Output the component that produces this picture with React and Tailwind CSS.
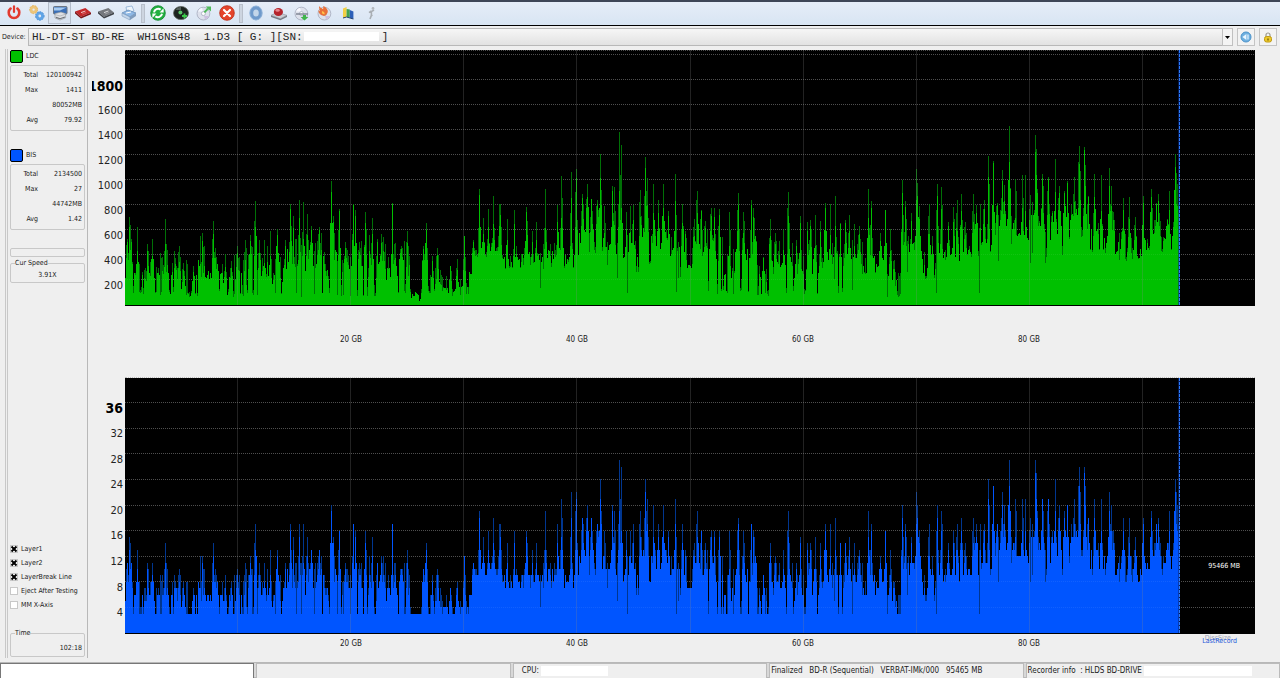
import React from 'react';

// ── Chart data ────────────────────────────────────────────

const PLOT_W = 1130;
const PLOT_H = 255;
const END_X = 1054;

// [start, base height, jitter, dip floor, dip chance]
const REGIONS = [
  [0, 34, 14, 10, 0.32],
  [55, 24, 14, 8, 0.42],
  [72, 36, 18, 9, 0.4],
  [94, 26, 14, 10, 0.36],
  [108, 42, 16, 8, 0.34],
  [136, 36, 18, 8, 0.4],
  [160, 46, 20, 8, 0.34],
  [212, 42, 20, 8, 0.42],
  [262, 40, 20, 12, 0.38],
  [286, 14, 8, 10, 0.3],
  [296, 40, 12, 11, 0.28],
  [304, 26, 16, 10, 0.5],
  [317, 20, 12, 10, 0.5],
  [344, 34, 6, 26, 0.1],
  [348, 56, 8, 40, 0.1],
  [376, 50, 14, 34, 0.22],
  [420, 54, 16, 36, 0.2],
  [454, 74, 18, 52, 0.2],
  [476, 58, 12, 38, 0.18],
  [500, 60, 14, 30, 0.16],
  [514, 68, 18, 40, 0.16],
  [545, 58, 14, 26, 0.16],
  [560, 44, 14, 28, 0.16],
  [568, 60, 12, 40, 0.18],
  [579, 56, 14, 11, 0.24],
  [598, 34, 16, 11, 0.4],
  [610, 56, 16, 11, 0.26],
  [631, 26, 16, 9, 0.5],
  [644, 46, 14, 10, 0.3],
  [664, 40, 20, 11, 0.42],
  [700, 52, 16, 12, 0.3],
  [732, 48, 12, 30, 0.26],
  [762, 32, 16, 8, 0.48],
  [776, 58, 14, 32, 0.26],
  [798, 44, 12, 26, 0.3],
  [814, 56, 12, 42, 0.22],
  [846, 68, 14, 46, 0.22],
  [872, 86, 12, 60, 0.18],
  [890, 72, 12, 48, 0.22],
  [906, 88, 14, 50, 0.22],
  [920, 76, 14, 48, 0.22],
  [938, 94, 12, 66, 0.2],
  [962, 76, 12, 52, 0.22],
  [986, 60, 12, 44, 0.22],
  [1024, 74, 12, 52, 0.22],
  [1048, 84, 6, 70, 0.1],
];

// x, peak height
const PEAKS = [
  2, 66, 4, 88, 6, 66, 12, 78, 22, 61, 27, 66, 40, 86, 42, 55, 50, 42, 54, 59, 58, 42, 68, 39,
  75, 69, 77, 72, 79, 59, 88, 84, 90, 57, 100, 51, 106, 43, 112, 59, 120, 65, 125, 70, 130, 104,
  134, 65, 142, 59, 145, 74, 152, 76, 160, 63, 165, 101, 168, 89, 174, 105, 178, 103, 182, 91,
  186, 79, 192, 64, 194, 78, 199, 53, 206, 124, 208, 89, 214, 96, 220, 63, 222, 55, 228, 101,
  230, 95, 234, 63, 240, 93, 244, 70, 247, 87, 252, 66, 256, 71, 258, 68, 267, 102, 270, 62,
  276, 59, 282, 74, 298, 59, 301, 82, 307, 49, 312, 57, 325, 39, 332, 46, 339, 69, 348, 65,
  354, 116, 358, 87, 363, 96, 368, 109, 374, 101, 375, 101, 382, 86, 389, 95, 401, 98, 407, 74,
  411, 83, 420, 116, 432, 100, 436, 129, 446, 133, 451, 136, 457, 111, 462, 121, 466, 106,
  472, 105, 475, 151, 479, 99, 487, 119, 489, 118, 494, 173, 496, 160, 501, 93, 505, 99, 508, 100,
  515, 115, 520, 148, 522, 127, 528, 121, 533, 105, 538, 121, 543, 94, 550, 131, 557, 101,
  560, 74, 569, 86, 572, 114, 576, 95, 580, 84, 586, 97, 589, 97, 594, 96, 604, 93, 613, 112,
  618, 93, 626, 105, 628, 97, 630, 69, 638, 48, 645, 86, 650, 72, 658, 75, 663, 113, 671, 65,
  675, 89, 682, 83, 685, 85, 690, 90, 695, 84, 700, 102, 705, 101, 710, 109, 715, 82, 720, 85,
  724, 90, 729, 81, 734, 79, 743, 116, 746, 104, 755, 72, 760, 95, 765, 76, 777, 125, 780, 104,
  786, 92, 791, 136, 792, 122, 794, 99, 804, 101, 807, 69, 812, 121, 816, 118, 823, 83, 828, 98,
  832, 105, 836, 111, 840, 83, 848, 111, 851, 100, 855, 101, 859, 105, 863, 149, 868, 144,
  872, 102, 877, 135, 879, 120, 884, 179, 890, 126, 897, 130, 900, 130, 905, 110, 910, 170,
  911, 149, 917, 131, 923, 128, 927, 94, 930, 146, 934, 119, 939, 114, 942, 124, 949, 128,
  954, 159, 959, 158, 963, 109, 969, 131, 976, 130, 984, 137, 986, 119, 988, 93, 998, 107,
  1004, 108, 1010, 88, 1018, 109, 1026, 116, 1031, 102, 1033, 111, 1042, 86, 1044, 114,
  1050, 151, 1052, 121, 1053, 92,
];

// single deep dips inside the dense part
const DIPS = [415, 17, 492, 27, 502, 12, 551, 13, 811, 12, 854, 12, 873, 44, 905, 42, 920, 42];

const random = (seed) => {
  let s = seed;
  return () => {
    s = (s * 1664525 + 1013904223) % 4294967296;
    return s / 4294967296;
  };
};

const buildScan = () => {
  const rnd = random(91);
  const solid = [];
  const dim = [];
  let r = 0;
  for (let x = 0; x < END_X; x++) {
    while (r < REGIONS.length - 1 && REGIONS[r + 1][0] <= x) r++;
    const [, base, jitter, floor, chance] = REGIONS[r];
    const wave = Math.sin(x * 0.55) * 0.4 + Math.sin(x * 0.21) * 0.3;
    const v = base - 4 + jitter * (wave * 0.6 + (rnd() - 0.5));
    const dip = rnd() < chance;
    solid[x] = dip ? floor + rnd() * 4 : v;
    dim[x] = rnd() < 0.3 ? v + jitter * rnd() * 1.4 : solid[x] + (v - solid[x]) * rnd() * 0.4;
  }
  for (let i = 0; i < PEAKS.length; i += 2) {
    const x = PEAKS[i];
    const h = PEAKS[i + 1];
    const base = Math.max(solid[x], 20);
    const k = rnd();
    dim[x] = Math.max(dim[x], h);
    solid[x] = Math.max(solid[x], base + (h - base) * (0.4 + k * 0.6));
    [-1, 1].forEach((d) => {
      const n = x + d;
      if (n < 0 || n >= END_X) return;
      dim[n] = Math.max(dim[n], base + (h - base) * 0.85 * rnd());
      solid[n] = Math.max(solid[n], base + (h - base) * 0.5 * rnd());
    });
  }
  for (let i = 0; i < DIPS.length; i += 2) {
    solid[DIPS[i]] = DIPS[i + 1];
  }
  return { solid, dim };
};

const SCAN = buildScan();

// BIS counts follow LDC in whole steps of 6.4px
const toBis = (h) => Math.min(27, Math.max(3, Math.round(h * 0.154 + 1.2))) * 6.4;

const areaPath = (values) => {
  const pts = values.map((v, x) => `V${(PLOT_H - v).toFixed(1)}H${x + 1}`).join('');
  return `M0 ${PLOT_H}${pts}V${PLOT_H}Z`;
};

const LDC_PATHS = { solid: areaPath(SCAN.solid), dim: areaPath(SCAN.dim) };
const BIS_PATHS = {
  solid: areaPath(SCAN.solid.map(toBis)),
  dim: areaPath(SCAN.dim.map(toBis)),
};

// ── Icons ─────────────────────────────────────────────────

const Icon = ({ children }) => (
  <svg width="16" height="16" viewBox="0 0 16 16" fill="none" aria-hidden="true">{children}</svg>
);

const PowerIcon = () => (
  <Icon>
    <path d="M4.600 3.600A5.300 5.300 0 1 0 11.400 3.600" stroke="#e23a30" strokeWidth="2.600" strokeLinecap="round" />
    <path d="M8 1.400V7" stroke="#e23a30" strokeWidth="2.200" strokeLinecap="round" />
  </Icon>
);

const GearsIcon = () => (
  <Icon>
    <circle cx="4.600" cy="4.600" r="2.600" stroke="#ecc57a" strokeWidth="2.800" />
    <circle cx="4.600" cy="4.600" r="4" stroke="#e2b25a" strokeWidth="1" strokeDasharray="1.600 1.200" />
    <circle cx="10.800" cy="11" r="2.800" stroke="#5fa4e6" strokeWidth="2.800" />
    <circle cx="10.800" cy="11" r="4.300" stroke="#4a8fd6" strokeWidth="1" strokeDasharray="1.600 1.200" />
  </Icon>
);

const DriveScreenIcon = () => (
  <Icon>
    <rect x="1.500" y="1.500" width="13.500" height="7.500" rx="1" fill="#3b70b8" stroke="#6a7482" />
    <path d="M2 2.500h12.500L8 5.500H2Z" fill="#a8cbf0" />
    <path d="M3 8.600 9 7l4.600 1.600v4.200L8 15l-5-2Z" fill="#dfe1e4" stroke="#8b9096" strokeWidth=".6" />
    <path d="M3 9.600 8 11l5.600-1.800" stroke="#9ea3a9" strokeWidth=".6" />
    <path d="M4 12.400l4 1.300 5-1.700" stroke="#6d7278" strokeWidth="1.200" />
  </Icon>
);

const ChipIcon = ({ top, side }) => (
  <Icon>
    <path d="M0 6.600 10.400 3 16 7.400 6 11.800Z" fill={top} />
    <path d="M0 6.600 6 11.800V13.600L0 8.400Z" fill={side} />
    <path d="M6 11.800 16 7.400V9.200L6 13.600Z" fill={side} />
    <path d="M6 7.600 10.400 6" stroke="#fff" strokeOpacity=".75" />
    <path d="M7 9 11.200 7.400" stroke="#fff" strokeOpacity=".4" strokeWidth=".7" />
  </Icon>
);

const PrinterIcon = () => (
  <Icon>
    <path d="M5 2l6-1 2 5-7 2Z" fill="#eef5fc" stroke="#7ea3cc" strokeWidth=".7" />
    <path d="M1 8l6-3 8 3-6 4Z" fill="#8fb8e4" stroke="#5f87b3" strokeWidth=".7" />
    <path d="M1 8v3l8 4v-3Z" fill="#c4d6ea" stroke="#6c8db2" strokeWidth=".5" />
    <path d="M9 12l6-4v3l-6 4Z" fill="#7f9cbd" />
    <path d="M5 8l5-1" stroke="#fff" />
  </Icon>
);

const RefreshIcon = () => (
  <Icon>
    <circle cx="8" cy="8" r="7.300" fill="#22b040" stroke="#12852c" strokeWidth=".8" />
    <path d="M4 7.400A4.200 4.200 0 0 1 10.600 4.600" stroke="#fff" strokeWidth="2" />
    <path d="M9.600 7.600h4V3.200Z" fill="#fff" />
    <path d="M12 8.800A4.200 4.200 0 0 1 5.400 11.400" stroke="#fff" strokeWidth="2" />
    <path d="M6.400 8.600h-4V13Z" fill="#fff" />
  </Icon>
);

const BlackDiscIcon = () => (
  <Icon>
    <ellipse cx="8" cy="8" rx="7.500" ry="6.600" fill="#1c231f" stroke="#5f6662" strokeWidth=".8" />
    <path d="M2.600 5A6 6 0 0 1 8 2v3Z" fill="#55605a" />
    <circle cx="7.400" cy="7.600" r="2" fill="#5ac468" />
    <path d="M9 11h5M11.500 8.600v5" stroke="#39c84a" strokeWidth="1.800" />
  </Icon>
);

const Cd = () => (
  <>
    <circle cx="7.400" cy="8.600" r="6.400" fill="#dde1ec" stroke="#a4abbc" strokeWidth=".8" />
    <path d="M2 6.400A6 6 0 0 1 6 2.800l1 3.600Z" fill="#f8f9ff" />
    <path d="M13 11A6 6 0 0 1 9 14.400L8 11Z" fill="#cdbfe0" />
    <circle cx="7.400" cy="8.600" r="2" fill="#fff" stroke="#a4abbc" strokeWidth=".8" />
  </>
);

const CdUpIcon = () => (
  <Icon>
    <Cd />
    <path d="M8.400 7.400 12 3.600" stroke="#4dba58" strokeWidth="2" />
    <path d="M9.800 1.400H15v5.200Z" fill="#4dba58" />
  </Icon>
);

const CloseIcon = () => (
  <Icon>
    <circle cx="8" cy="8" r="7.300" fill="#e4452c" stroke="#bb2a14" strokeWidth=".8" />
    <path d="M5 5l6 6M11 5l-6 6" stroke="#fff" strokeWidth="2.200" strokeLinecap="round" />
  </Icon>
);

const RingIcon = () => (
  <Icon>
    <ellipse cx="8" cy="8" rx="4.600" ry="5.400" fill="#c3d6ea" stroke="#6f9acb" strokeWidth="3.600" />
    <ellipse cx="8" cy="8" rx="6.200" ry="7" stroke="#9cbbdd" strokeWidth=".8" />
  </Icon>
);

const RedDriveIcon = () => (
  <Icon>
    <path d="M0 10.400 6 7.400l10 3-6.600 3.400Z" fill="#c9ccd2" stroke="#878c95" strokeWidth=".6" />
    <path d="M0 10.400v1.600l9.400 3.200v-1.400ZM9.400 13.800l6.600-3.400v1.600l-6.600 3.200Z" fill="#777c85" />
    <ellipse cx="7.400" cy="7" rx="4.600" ry="4" fill="#b5232b" />
    <ellipse cx="6.600" cy="5.400" rx="2.200" ry="1.400" fill="#e9858a" />
  </Icon>
);

const CdDownIcon = () => (
  <Icon>
    <Cd />
    <path d="M2 9h12" stroke="#7a8190" strokeWidth="1.400" />
    <path d="M9 10h3v2h2.400L10.500 15.600 6.600 12H9Z" fill="#3fb54a" />
  </Icon>
);

const FlameCdIcon = () => (
  <Icon>
    <Cd />
    <path d="M2 1c1 1.600 2.600 1.800 4 3 .6-1 .4-2 0-3 3 1 5.600 4 4.600 6.600S8 11.600 5.600 10.600 1 8 1.600 5c.3.6.6 1 1.200 1.200C2.600 4 1.800 2.600 2 1Z" fill="#e8703a" />
    <path d="M5 6c1.400.4 3 1.400 2.600 3.200C6 9.600 4.400 8.400 5 6Z" fill="#ffc04a" />
  </Icon>
);

const BooksIcon = () => (
  <Icon>
    <path d="M3 3.400 6.600 2v10L3 13Z" fill="#f2cf45" />
    <path d="M6.600 4l3.200.4v8.400L6.600 12Z" fill="#44a350" />
    <path d="M9.800 5l3.600 1.600v7.400L9.800 12.800Z" fill="#2c5fb8" />
    <path d="M3 13l3.600-1 6.800 2" stroke="#23426f" />
  </Icon>
);

const FigureIcon = () => (
  <Icon>
    <path d="M8.400 6 6 7.600M8.400 6v4.400L7 14M8.400 10l1 .8M8.400 6.600 11 5" stroke="#a9aeb3" strokeWidth="1.600" />
    <circle cx="10" cy="3.400" r="1.400" fill="#b4b9bf" />
  </Icon>
);

const TOOLS = [
  ['Power', <PowerIcon />],
  ['Settings', <GearsIcon />],
  ['Drive', <DriveScreenIcon />],
  ['Read chip', <ChipIcon top="#c3282a" side="#7c1214" />],
  ['Write chip', <ChipIcon top="#74777c" side="#3f4246" />],
  ['Print', <PrinterIcon />],
  null,
  ['Refresh', <RefreshIcon />],
  ['Disc info', <BlackDiscIcon />],
  ['Export disc', <CdUpIcon />],
  ['Stop', <CloseIcon />],
  null,
  ['Ring', <RingIcon />],
  ['Eject', <RedDriveIcon />],
  ['Load', <CdDownIcon />],
  ['Burn', <FlameCdIcon />],
  ['Library', <BooksIcon />],
  ['About', <FigureIcon />],
];

// ── Bars ──────────────────────────────────────────────────

const Toolbar = () => (
  <div className="flex h-[26px] items-center border-t-2 border-b border-t-[#3f4657] border-b-black bg-linear-to-b from-[#e6edf8] to-[#d8e5f3] pb-px pl-0.5">
    {TOOLS.map((tool, i) =>
      tool ? (
        <button
          key={tool[0]}
          type="button"
          aria-label={tool[0]}
          className={i === 2
            ? 'flex h-[22px] w-[23px] items-center justify-center border border-[#b4bdca] bg-[#d9e3f0]'
            : 'flex h-[22px] w-[23px] items-center justify-center'}
        >
          {tool[1]}
        </button>
      ) : (
        <span key={i} className="mx-px h-[19px] w-1 border border-[#b9c0cb] bg-[#cdd5e0]" />
      )
    )}
  </div>
);

const DeviceBar = () => (
  <div className="mt-[2px] flex h-[18px] items-center gap-1 pr-[3px] pl-0.5">
    <label htmlFor="device" className="w-[22px] text-[7px] whitespace-nowrap">Device:</label>
    <div className="relative h-[18px] flex-1">
      <select
        id="device"
        className="h-full w-full appearance-none border border-[#b8b8b8] bg-linear-to-b from-[#f6f6f6] to-[#e2e2e2] pl-[3px] font-['Liberation_Mono',monospace] text-[11px] leading-4 text-[#222]"
      >
        <option>{'HL-DT-ST\u00a0BD-RE\u00a0\u00a0WH16NS48\u00a0\u00a01.D3\u00a0[\u00a0G:\u00a0][SN:\u00a0\u00a0\u00a0\u00a0\u00a0\u00a0\u00a0\u00a0\u00a0\u00a0\u00a0\u00a0]'}</option>
      </select>
      <span className="absolute top-1 left-[276px] h-[9px] w-[75px] bg-white" />
      <span className="pointer-events-none absolute top-0 right-0 flex h-full w-[11px] items-center justify-center border border-[#c0c0c0] bg-[#f4f4f4]">
        <svg width="5" height="3" viewBox="0 0 5 3"><path d="M0 0h5L2.500 3Z" fill="#000" /></svg>
      </span>
    </div>
    <button type="button" aria-label="Back" className="flex h-[18px] w-[18px] items-center justify-center border border-[#c4c4c4] bg-[#f3f3f3]">
      <svg width="12" height="12" viewBox="0 0 12 12">
        <circle cx="6" cy="6" r="5" fill="#6fb0e0" stroke="#4a92ca" />
        <path d="M2.400 6 6.400 3v6ZM7.400 3.400h1.200v5.200H7.400Z" fill="#eaf6ff" />
      </svg>
    </button>
    <button type="button" aria-label="Lock" className="flex h-[18px] w-[18px] items-center justify-center border border-[#c4c4c4] bg-[#f3f3f3]">
      <svg width="10" height="11" viewBox="0 0 10 11">
        <path d="M3 5V3a2 2 0 0 1 4 0v2" fill="none" stroke="#9a9a90" strokeWidth="1.200" />
        <rect x="1.500" y="4.500" width="7" height="5.500" rx="2" fill="#ecc92a" stroke="#c09a16" />
        <path d="M5 6.400v2" stroke="#6b5200" strokeWidth="1.200" />
      </svg>
    </button>
  </div>
);

// ── Sidebar ───────────────────────────────────────────────

const StatBlock = ({ name, swatch, total, max, at, avg }) => (
  <section>
    <h2 className="flex h-[13px] items-center gap-[3px]">
      <span className={`h-[13px] w-[13px] rounded-[2px] border border-black ${swatch}`} />
      {name}
    </h2>
    <dl className="mt-[2px] grid grid-cols-[27px_1fr] rounded-[2px] border border-[#c8c8c8] py-[2px] pr-[2px] leading-[15px]">
      <dt className="text-right">Total</dt>
      <dd className="text-right">{total}</dd>
      <dt className="text-right">Max</dt>
      <dd className="text-right">{max}</dd>
      <dd className="col-start-2 text-right">{at}</dd>
      <dt className="text-right">Avg</dt>
      <dd className="text-right">{avg}</dd>
    </dl>
  </section>
);

const Check = ({ label, checked }) => (
  <label className="flex h-[14px] items-center gap-[3px] whitespace-nowrap">
    <span className="relative flex h-2 w-2">
      <input
        type="checkbox"
        defaultChecked={checked}
        className="peer h-2 w-2 appearance-none border border-[#c8c8c8] bg-white"
      />
      <svg className="pointer-events-none absolute inset-0 hidden peer-checked:block" width="8" height="8" viewBox="0 0 8 8">
        <path d="M1.500 1.500l5 5M6.500 1.500l-5 5" stroke="#000" strokeWidth="2" />
      </svg>
    </span>
    {label}
  </label>
);

const Sidebar = () => (
  <aside className="flex w-[88px] shrink-0 border-r border-[#b8b8b8] pl-[5px] text-[7px]">
    <div className="flex min-w-0 flex-1 flex-col border-l-3 border-double border-[#c8c8c8] py-px pr-[2px] pl-[2px]">
      <StatBlock name="LDC" swatch="bg-[#00c000]" total="120100942" max="1411" at="80052MB" avg="79.92" />
      <div className="h-[18px]" />
      <StatBlock name="BIS" swatch="bg-[#0055ff]" total="2134500" max="27" at="44742MB" avg="1.42" />
      <div className="mt-[18px] h-[9px] rounded-[2px] border border-[#c8c8c8]" />
      <fieldset className="mt-px min-w-0 rounded-[2px] border border-[#c8c8c8] text-center">
        <legend className="ml-1 text-left leading-[10px]">Cur Speed</legend>
        <p className="leading-[14px]">3.91X</p>
      </fieldset>
      <div className="flex-1" />
      <Check label="Layer1" checked />
      <Check label="Layer2" checked />
      <Check label="LayerBreak Line" checked />
      <Check label="Eject After Testing" />
      <Check label="MM X-Axis" />
      <fieldset className="mt-4 min-w-0 rounded-[2px] border border-[#c8c8c8] pr-[2px] text-right">
        <legend className="ml-1 text-left leading-[10px]">Time</legend>
        <p className="pt-[3px] pb-px leading-[14px]">102:18</p>
      </fieldset>
    </div>
  </aside>
);

// ── Plots ─────────────────────────────────────────────────

const GridRows = ({ rows, opacity }) => rows.map((y) => (
  <line key={y} x1="0" x2={PLOT_W} y1={y} y2={y} stroke="#fff" strokeOpacity={opacity} strokeDasharray="1 1" />
));

const Plot = ({ paths, color, dimColor, step, topLine, children }) => {
  const rows = topLine ? [0.5] : [];
  for (let y = PLOT_H - step; y > 0; y -= step) rows.push(Math.floor(y) + 0.5);
  const cols = [1, 2, 3, 4, 5, 6, 7, 8, 9].map((n) => Math.round(n * 113.1) - 0.5);
  return (
    <div className="relative min-w-0 flex-1">
      <svg
        className="block h-[256px] w-full bg-black"
        viewBox={`0 0 ${PLOT_W} ${PLOT_H + 1}`}
        preserveAspectRatio="none"
        shapeRendering="crispEdges"
      >
        <GridRows rows={rows} opacity="0.26" />
        <path d={paths.dim} fill={dimColor} />
        <path d={paths.solid} fill={color} />
        <GridRows rows={rows} opacity="0.07" />
        {cols.map((x) => (
          <line key={x} x1={x} x2={x} y1="0" y2={PLOT_H} stroke="#888" strokeOpacity="0.25" />
        ))}
        <rect x={END_X - 1} y="0" width="2" height={PLOT_H} fill="#0a2a80" fillOpacity="0.6" />
        <line x1={END_X + 0.5} x2={END_X + 0.5} y1="0" y2={PLOT_H} stroke="#2a7cff" strokeDasharray="3 1" />
      </svg>
      {children}
    </div>
  );
};

const YAxis = ({ labels, className }) => (
  <div className={`ml-1 flex w-[33px] shrink-0 flex-col justify-between overflow-hidden pr-[2px] text-right text-[11px] text-[#222] ${className}`}>
    {labels.map((n, i) => (
      <span key={n} className={i === 0 ? 'flex h-[25px] items-center justify-end text-[14px] font-bold text-black' : 'flex h-[25px] items-center justify-end'}>
        {n}
      </span>
    ))}
  </div>
);

const XAxis = ({ className }) => (
  <div className={`mr-[25px] ml-[37px] text-[8px] ${className}`}>
    <div className="flex pl-[10%]">
      {['20 GB', '40 GB', '60 GB', '80 GB'].map((l) => (
        <span key={l} className="w-[22.222%] text-center leading-3">{l}</span>
      ))}
    </div>
  </div>
);

const Charts = () => (
  <main className="min-w-0 flex-1 pt-px">
    <div className="flex pr-[25px]">
      <YAxis labels={[1800, 1600, 1400, 1200, 1000, 800, 600, 400, 200]} className="mt-[24px] h-[225px]" />
      <Plot paths={LDC_PATHS} color="#00c000" dimColor="#007006" step={25.1} topLine />
    </div>
    <XAxis className="pt-[28px]" />
    <div className="mt-[31px] mr-[25px] ml-[37px] border-t border-dotted border-[#c0c0c0]" />
    <div className="flex pr-[25px]">
      <YAxis labels={[36, 32, 28, 24, 20, 16, 12, 8, 4]} className="mt-[18px] h-[230px]" />
      <Plot paths={BIS_PATHS} color="#0055ff" dimColor="#003690" step={25.6}>
        <span className="absolute right-[15px] bottom-[62px] text-[7px] leading-3 text-white">95466 MB</span>
        <span className="absolute right-[24px] -bottom-[10px] text-[7px] leading-3 text-[#9a9fb8]">DiscSize</span>
        <span className="absolute right-[18px] -bottom-[13px] text-[7px] leading-3 text-[#2257d8]">LastRecord</span>
      </Plot>
    </div>
    <XAxis className="pt-1" />
  </main>
);

// ── Status bar ────────────────────────────────────────────

const StatusBar = () => (
  <footer className="grid h-[16px] grid-cols-5 gap-[2px] border-t border-b border-[#b8b8b8] bg-[#d8d8d8] text-[8px] leading-[14px] whitespace-pre">
    <div className="border border-[#777] bg-white" />
    <div className="border border-[#bbb] bg-[#efefef]" />
    <div className="flex min-w-0 items-center border border-[#bbb] bg-[#efefef] pl-2">
      CPU:
      <span className="ml-0.5 h-[10px] w-[67px] bg-white" />
    </div>
    <div className="flex min-w-0 items-center border border-[#bbb] bg-[#efefef] pl-px">
      {'Finalized   BD-R (Sequential)   VERBAT-IMk/000   95465 MB'}
    </div>
    <div className="flex min-w-0 items-center border border-[#bbb] bg-[#efefef] pl-px">
      Recorder info  : HLDS BD-DRIVE
      <span className="ml-0.5 h-[10px] w-[108px] bg-white" />
    </div>
  </footer>
);

export default function App() {
  return (
    <div className="flex min-h-screen flex-col bg-[#efefef] font-['DejaVu_Sans_Condensed','DejaVu_Sans',sans-serif] text-[8px] text-[#1a1a1a]">
      <Toolbar />
      <DeviceBar />
      <div className="mt-[3px] mb-1 flex flex-1">
        <Sidebar />
        <Charts />
      </div>
      <StatusBar />
    </div>
  );
}
